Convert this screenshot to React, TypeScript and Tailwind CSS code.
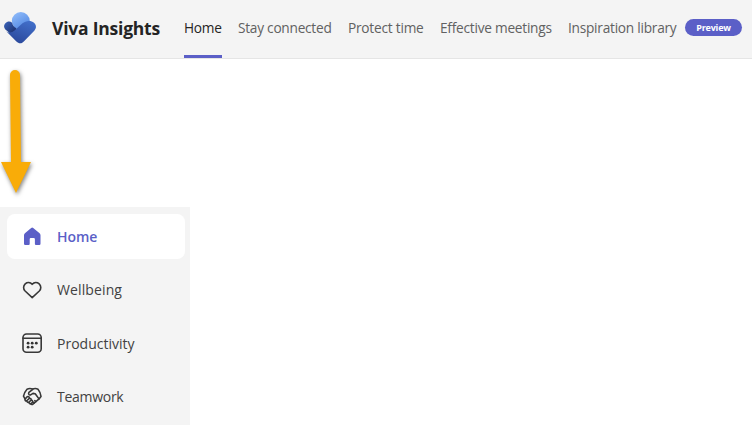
import type { ReactNode } from "react";

const tabs = [
  { label: "Home", style: "w-[38px] tracking-[-0.25px] text-[#252423]", active: true },
  { label: "Stay connected", style: "w-[94px] tracking-[-0.26px] text-[#616161]" },
  { label: "Protect time", style: "w-[76px] tracking-[-0.23px] text-[#616161]" },
  { label: "Effective meetings", style: "w-[112px] tracking-[-0.25px] text-[#616161]" },
  { label: "Inspiration library", style: "w-[109px] tracking-[-0.25px] text-[#616161]" },
];

function Logo() {
  return (
    <svg width="34" height="34" viewBox="0 0 34 34" className="block">
      <defs>
        <linearGradient id="circle" x1="0.2" y1="0" x2="0.8" y2="1">
          <stop offset="0" stopColor="#8fbbfa" />
          <stop offset="1" stopColor="#4b82df" />
        </linearGradient>
        <linearGradient id="left" x1="0" y1="0" x2="0.6" y2="0.7">
          <stop offset="0" stopColor="#3b65bd" />
          <stop offset="1" stopColor="#203778" />
        </linearGradient>
        <linearGradient id="right" x1="0.8" y1="0" x2="0.3" y2="1">
          <stop offset="0" stopColor="#426fca" />
          <stop offset="1" stopColor="#2a489a" />
        </linearGradient>
      </defs>
      <circle cx="17.8" cy="10" r="9" fill="url(#circle)" />
      <path d="M2.4 12.2C4.5 9.9 7.2 10 9.1 11.7C9.6 14.2 11 16 13.6 17.4L13 27.5L3.3 19.2C.6 17 .5 14.2 2.4 12.2Z" fill="url(#left)" />
      <path d="M11.5 19.6L19.5 12.3C22.5 9.6 28 8.8 31 11.8C33.8 14.5 33.4 17.5 31.3 19.7L20.8 30.4C18.3 32.9 15.9 32.8 13.4 30.4L3 19.9C5.7 22 8.7 22.1 11.5 19.6Z" fill="url(#right)" />
    </svg>
  );
}

function Icon({ children }: { children: ReactNode }) {
  return (
    <svg width="20" height="20" viewBox="0 0 20 20" fill="none" stroke="#383838" strokeWidth="1.6" strokeLinejoin="round" strokeLinecap="round" className="block shrink-0">
      {children}
    </svg>
  );
}

function HomeIcon() {
  return (
    <Icon>
      <path d="M9.2 1Q10.2 .1 11.2 1L17.3 5.9Q18.5 6.9 18.5 8.3V16.8Q18.5 18 17.3 18H14Q12.9 18 12.9 16.9V12.2Q12.9 11 11.8 11H8.8Q7.7 11 7.7 12.2V16.9Q7.7 18 6.6 18H3.2Q2 18 2 16.8V8.3Q2 6.9 3.2 5.9Z" fill="#5b5fc7" stroke="none" />
    </Icon>
  );
}

function HeartIcon() {
  return (
    <Icon>
      <path d="M10.2 4.3C8.3 2.2 5.3 2.1 3.2 3.9C1.1 5.9 1.1 9 3.1 11L10.2 17.6L17.3 11C19.3 9 19.3 5.9 17.2 3.9C15.1 2.1 12.1 2.2 10.2 4.3Z" />
    </Icon>
  );
}

function CalendarIcon() {
  return (
    <Icon>
      <rect x="1" y="1" width="18.2" height="18.2" rx="3.5" />
      <path d="M1 5.2H19" />
      <g fill="#333" stroke="none">
        <circle cx="6.1" cy="10.2" r="1.4" />
        <circle cx="10.2" cy="10.2" r="1.4" />
        <circle cx="14.3" cy="10.2" r="1.4" />
        <circle cx="6.1" cy="14.2" r="1.4" />
        <circle cx="10.2" cy="14.2" r="1.4" />
      </g>
    </Icon>
  );
}

function HandshakeIcon() {
  return (
    <Icon>
      <path d="M10.5 2C8.5 1.3 6.5 1.5 5 2.2C3.3 4 2.1 6.4 1.5 9.2L3 11.8M10.5 2C12.4 1.3 14.4 1.3 16 2.2C17.6 4 18.5 6.5 19 9.4L16.8 12.2L10.9 17.2C10.2 17.8 9.2 17.5 8.7 16.6" />
      <path d="M10.8 2.3L6.9 5.4C6.1 6.9 7 8.3 8.6 7.9L11 6.4L13.2 6.7L17 11.9" />
      <path d="M5.2 9.8L3.2 11.9C2.5 13.2 3.8 14.5 5 13.5L7.1 11.6C7.8 10.2 6.5 9 5.2 9.8ZM5 13.5C4.7 14.9 5.8 15.9 7.1 15L9.1 13.1C9.5 11.8 8.4 10.8 7.1 11.6M7.1 15C6.9 16.4 8.1 17.4 9.2 16.5L10.6 15.2C10.9 13.9 10.2 13 9.1 13.1" />
      <path d="M11.1 15.2L12 16.1M12.8 13.7L13.9 14.6" />
    </Icon>
  );
}

function NavItem({ icon, label, style }: { icon: ReactNode; label: string; style: string }) {
  return (
    <a className={`flex h-[45px] w-[178px] shrink-0 items-center gap-[15px] whitespace-nowrap rounded-lg pl-[15px] text-[14px] ${style}`}>
      {icon}
      <span>{label}</span>
    </a>
  );
}

function Arrow() {
  return (
    <svg width="40" height="148" viewBox="0 0 40 148" className="block overflow-visible">
      <path d="M10 16A5 5 0 0 1 20 16L21 103H31L16 134L1 103H11Z" fill="#f9ac08" className="drop-shadow-[1px_2px_2px_rgba(0,0,0,0.5)]" />
    </svg>
  );
}

export default function App() {
  return (
    <div className="h-[425px] w-[752px] overflow-hidden bg-white font-['Open_Sans','Noto_Sans',sans-serif]">
      <header className="flex h-[59px] items-center border-b border-[#e5e5e5] bg-[#f4f4f4] pl-[3px]">
        <div className="w-[49px] pb-[2px]">
          <Logo />
        </div>
        <h1 className="w-[132px] whitespace-nowrap pb-[2px] text-[17.5px] font-bold tracking-[-0.22px] text-[#242424]">Viva Insights</h1>
        <nav className="flex h-full gap-4">
          {tabs.map((tab) => (
            <a key={tab.label} className={`flex h-full items-center whitespace-nowrap text-[13.7px] ${tab.style} ${tab.active ? "border-b-3 border-[#5b5fc7] pt-[2px]" : "pb-px"}`}>
              {tab.label}
            </a>
          ))}
        </nav>
        <span className="mb-[3px] ml-2 flex h-[17px] w-[57px] items-center justify-center rounded-full bg-[#5b5fc7] text-[9px] font-bold tracking-[-0.2px] text-white">Preview</span>
      </header>
      <Arrow />
      <aside className="flex h-[218px] w-[190px] flex-col gap-[8.4px] bg-[#f4f4f4] pl-[7px] pt-[7px]">
        <NavItem icon={<HomeIcon />} label="Home" style="bg-white font-semibold tracking-[-0.05px] text-[#5b5fc7]" />
        <NavItem icon={<HeartIcon />} label="Wellbeing" style="tracking-[0.12px] text-[#424242]" />
        <NavItem icon={<CalendarIcon />} label="Productivity" style="tracking-[0px] text-[#424242]" />
        <NavItem icon={<HandshakeIcon />} label="Teamwork" style="tracking-[-0.28px] text-[#424242]" />
      </aside>
    </div>
  );
}
